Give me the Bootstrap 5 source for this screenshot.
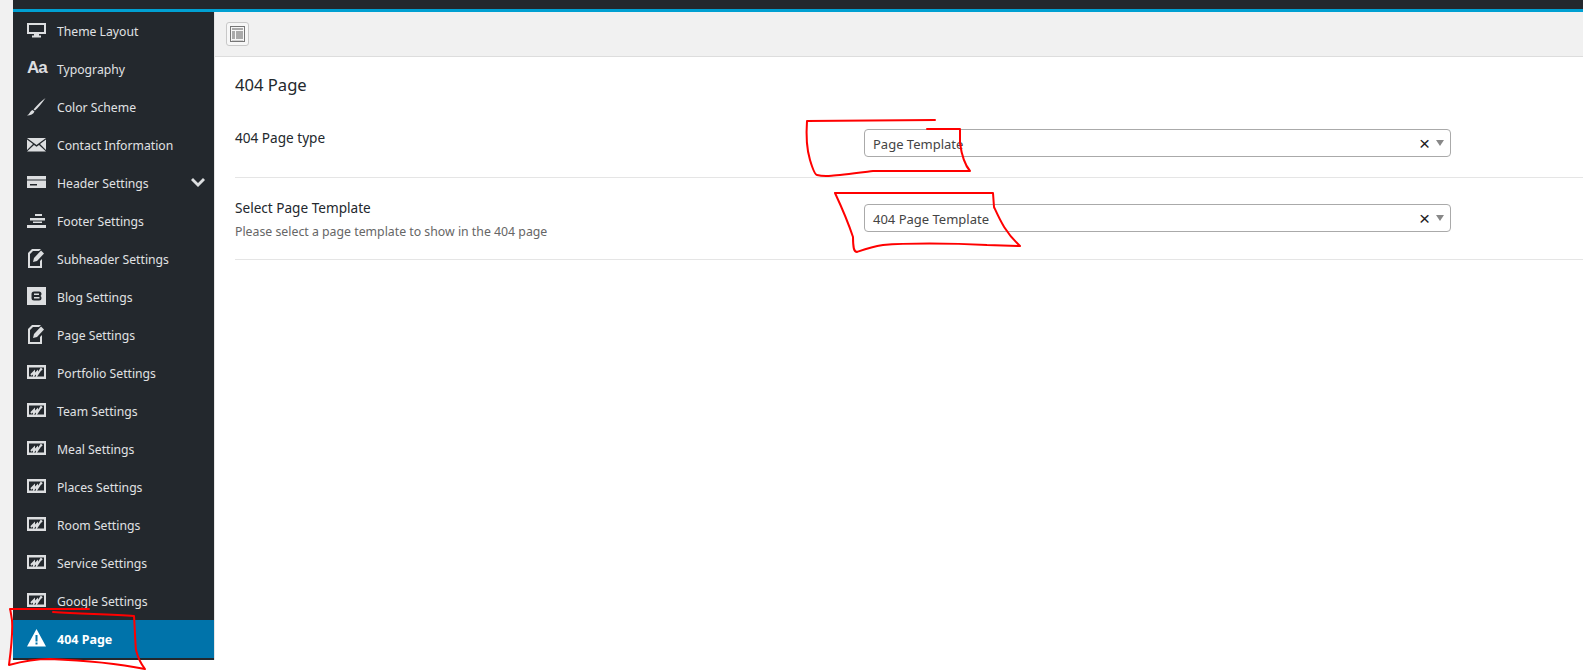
<!DOCTYPE html>
<html>
<head>
    <title>404 Page</title>
    <meta charset="utf-8">
    <meta name="viewport" content="width=device-width, initial-scale=1">
    <link href="https://cdn.jsdelivr.net/npm/bootstrap@5.3.0/dist/css/bootstrap.min.css" rel="stylesheet">
    <style>
    html, body { height: 670px; overflow: hidden; background: #fff; }
    body { font-family: "Noto Sans", "Open Sans", sans-serif; font-size: 13px; color: #23282d; position: relative; }

    .page-wrap { height: 660px; background: #f1f1f1; padding-left: 13px; }
    .top-strip { height: 12px; background: #23282d; border-bottom: 3px solid #00a0d2; }
    .main-row { height: 648px; }

    .side-menu { width: 201px; background: #23282d; flex-shrink: 0; }
    .side-item { height: 38px; padding-left: 14px; color: #e0e2e4; font-size: 12.2px; flex-shrink: 0; }
    .side-item svg { width: 20px; height: 20px; fill: #dcdee0; flex-shrink: 0; }
    .side-item span.side-text { margin-left: 10px; padding-top: 2px; white-space: nowrap; }
    .side-item .side-caret { margin-left: auto; margin-right: 9px; width: 14px; height: 14px; }
    .side-active { background: #0073aa; color: #fff; font-weight: 700; font-size: 12.5px; }
    .side-active svg { fill: #fff; }
    .aa-icon { width: 20px; font-family: "Liberation Sans", sans-serif; font-weight: 700; font-size: 17px; letter-spacing: -1px; color: #dcdee0; line-height: 20px; margin-top: -3px; }

    .content-area { background: #fff; border-left: 1px solid #e5e5e5; }
    .tool-bar { height: 45px; background: #f1f1f1; border-bottom: 1px solid #ddd; padding: 10px 0 0 11px; }
    .tool-btn { width: 23px; height: 24px; border: 1px solid #c8c8c8; border-radius: 3px; background: #f7f7f7; padding: 0; }
    .tool-btn svg { width: 15px; height: 16px; }

    .page-head { font-size: 16.6px; font-weight: 400; margin: 0; padding: 17px 0 0 20px; line-height: 22px; height: 52px; }
    .opt-row { margin-left: 20px; border-bottom: 1px solid #e5e5e5; }
    .opt-first { height: 69px; padding-top: 20px; }
    .opt-second { height: 82px; padding-top: 21px; }
    .opt-label { width: 629px; flex-shrink: 0; line-height: 18px; }
    .opt-name { font-weight: 400; font-size: 13.6px; }
    .opt-hint { color: #666; font-size: 12.3px; margin-top: 6px; }
    .sel-box { width: 587px; height: 28px; border: 1px solid #aaa; border-radius: 4px; padding: 0 8px; color: #444; }
    .sel-box > span:first-child { padding-top: 3px; }
    .opt-second .sel-box { margin-top: 5px; }
    .sel-x { margin-left: auto; color: #222; font-size: 19px; line-height: 1; font-family: "Liberation Sans", sans-serif; margin-right: 6px; margin-top: 1px; }
    .sel-arrow { width: 0; height: 0; border-left: 4px solid transparent; border-right: 4px solid transparent; border-top: 6px solid #888; margin-right: -2px; margin-top: -1px; }

    .scribble { position: absolute; left: 0; top: 0; width: 1583px; height: 670px; pointer-events: none; }
    </style>
</head>
<body>
    <svg width="0" height="0" class="d-block">
        <symbol id="chart-ico" viewBox="0 0 20 20">
            <path fill-rule="evenodd" d="M0 2h19v14H0zM2 4.500v9h15v-9z"/>
            <path fill="none" stroke="#dcdee0" stroke-width="2" d="M4 12l3-3v3l3-3v3l4-6 1 1"/>
        </symbol>
        <symbol id="edit-ico" viewBox="0 0 20 20">
            <path fill-rule="evenodd" d="M1 4l4-4h9l-2 2H6L3 5v12h10v-5l2-2v9H1z"/>
            <path d="M14 1.500l3 3-7 7.500-4 1 1-4z"/>
        </symbol>
    </svg>

    <div class="page-wrap d-flex flex-column">
        <div class="top-strip"></div>
        <div class="main-row d-flex">
            <div class="side-menu d-flex flex-column">
                <div class="side-item d-flex align-items-center">
                    <svg viewBox="0 0 20 20"><path fill-rule="evenodd" d="M0 2h19v11h-7v1.500h2v2H5v-2h2V13H0zM2 4v7h15V4z"/></svg>
                    <span class="side-text">Theme Layout</span>
                </div>
                <div class="side-item d-flex align-items-center">
                    <span class="aa-icon">Aa</span>
                    <span class="side-text">Typography</span>
                </div>
                <div class="side-item d-flex align-items-center">
                    <svg viewBox="0 0 20 20"><path d="M18.500 1C15 6 11 11 8 13.500L6.500 12.500C10 8 15 3.500 18.500 1zM5.500 13l2 1.500C6.500 17 3.500 18.500 0 18.500 3 17 3 14 5.500 13z"/></svg>
                    <span class="side-text">Color Scheme</span>
                </div>
                <div class="side-item d-flex align-items-center">
                    <svg viewBox="0 0 20 20"><path d="M0 3h19L9.500 10zM0 4.500L6 9l-6 6zM19 4.500V15l-6-6zM7 10l2.500 1.800L12 10l7 6.500H0z"/></svg>
                    <span class="side-text">Contact Information</span>
                </div>
                <div class="side-item d-flex align-items-center">
                    <svg viewBox="0 0 20 20"><path d="M0 3h19v3.500H0zM0 7.500h19V15H0z"/><path fill="#23282d" d="M3 11h7v1.500H3z"/></svg>
                    <span class="side-text">Header Settings</span>
                    <svg class="side-caret" viewBox="0 0 14 14"><path d="M0 4l2-2 5 5 5-5 2 2-7 7z"/></svg>
                </div>
                <div class="side-item d-flex align-items-center">
                    <svg viewBox="0 0 20 20"><path d="M8 3h7v2H8zM3 7h15v2.500H3zM6 10.500h9V12H6zM0 14h19v3H0z"/></svg>
                    <span class="side-text">Footer Settings</span>
                </div>
                <div class="side-item d-flex align-items-center">
                    <svg><use href="#edit-ico"/></svg>
                    <span class="side-text">Subheader Settings</span>
                </div>
                <div class="side-item d-flex align-items-center">
                    <svg viewBox="0 0 20 20"><path fill-rule="evenodd" d="M0 0h19v18H0zM7 4.500Q4.500 4.500 4.500 7V11Q4.500 13.500 7 13.500H12Q14.500 13.500 14.500 11Q14.500 9.500 13.500 9Q14.500 8 14.500 7Q14.500 4.500 12 4.500zM7 6.500h5v1.500H7zM7 10h5.500v1.500H7z"/></svg>
                    <span class="side-text">Blog Settings</span>
                </div>
                <div class="side-item d-flex align-items-center">
                    <svg><use href="#edit-ico"/></svg>
                    <span class="side-text">Page Settings</span>
                </div>
                <div class="side-item d-flex align-items-center">
                    <svg><use href="#chart-ico"/></svg>
                    <span class="side-text">Portfolio Settings</span>
                </div>
                <div class="side-item d-flex align-items-center">
                    <svg><use href="#chart-ico"/></svg>
                    <span class="side-text">Team Settings</span>
                </div>
                <div class="side-item d-flex align-items-center">
                    <svg><use href="#chart-ico"/></svg>
                    <span class="side-text">Meal Settings</span>
                </div>
                <div class="side-item d-flex align-items-center">
                    <svg><use href="#chart-ico"/></svg>
                    <span class="side-text">Places Settings</span>
                </div>
                <div class="side-item d-flex align-items-center">
                    <svg><use href="#chart-ico"/></svg>
                    <span class="side-text">Room Settings</span>
                </div>
                <div class="side-item d-flex align-items-center">
                    <svg><use href="#chart-ico"/></svg>
                    <span class="side-text">Service Settings</span>
                </div>
                <div class="side-item d-flex align-items-center">
                    <svg><use href="#chart-ico"/></svg>
                    <span class="side-text">Google Settings</span>
                </div>
                <div class="side-item side-active d-flex align-items-center">
                    <svg viewBox="0 0 20 20"><path fill-rule="evenodd" d="M9.500 0l9.500 17.500H0zM8.500 6v6.500h2V6zM8.500 13.500v2h2v-2z"/></svg>
                    <span class="side-text">404 Page</span>
                </div>
            </div>

            <div class="content-area flex-grow-1">
                <div class="tool-bar">
                    <button class="tool-btn d-flex align-items-center justify-content-center" type="button">
                        <svg viewBox="0 0 15 16"><path fill="#777" fill-rule="evenodd" d="M0 0h15v16H0zM1 1v14h13V1z"/><path fill="#aaa" d="M2 2h11v2H2zM2 5h3v8H2zM6 5h7v8H6zM2 14h11v.5H2z"/></svg>
                    </button>
                </div>
                <h1 class="page-head">404 Page</h1>
                <div class="opt-row opt-first d-flex">
                    <div class="opt-label opt-name">404 Page type</div>
                    <div class="sel-box d-flex align-items-center">
                        <span>Page Template</span>
                        <span class="sel-x">×</span>
                        <span class="sel-arrow"></span>
                    </div>
                </div>
                <div class="opt-row opt-second d-flex">
                    <div class="opt-label">
                        <div class="opt-name">Select Page Template</div>
                        <div class="opt-hint">Please select a page template to show in the 404 page</div>
                    </div>
                    <div class="sel-box d-flex align-items-center">
                        <span>404 Page Template</span>
                        <span class="sel-x">×</span>
                        <span class="sel-arrow"></span>
                    </div>
                </div>
            </div>
        </div>
    </div>

    <!-- red pen marks drawn over the page -->
    <svg class="scribble" viewBox="0 0 1583 670" fill="none" stroke="#f00" stroke-width="2" stroke-linejoin="round" stroke-linecap="round">
        <path d="M935 120L807 121C806 135 807 150 810 160C813 170 815 175 817 175C825 177 832 176 873 171L970 171C965 165 962 158 960 143L960 129L927 129"/>
        <path d="M835 193L993 193L994 207C1000 220 1005 232 1020 246L987 245C950 243 905 243 883 245C870 247 860 251 857 252C854 252 853 248 853 237C848 222 842 208 835 193Z"/>
        <path d="M89 609L10 609C11 612 11 615 12 620C13 635 11 650 9 665C20 662 35 659 50 659C100 661 125 665 145 669C141 664 138 658 136 650C135 640 135 630 134 616C110 614 80 614 53 612"/>
    </svg>
</body>
</html>
